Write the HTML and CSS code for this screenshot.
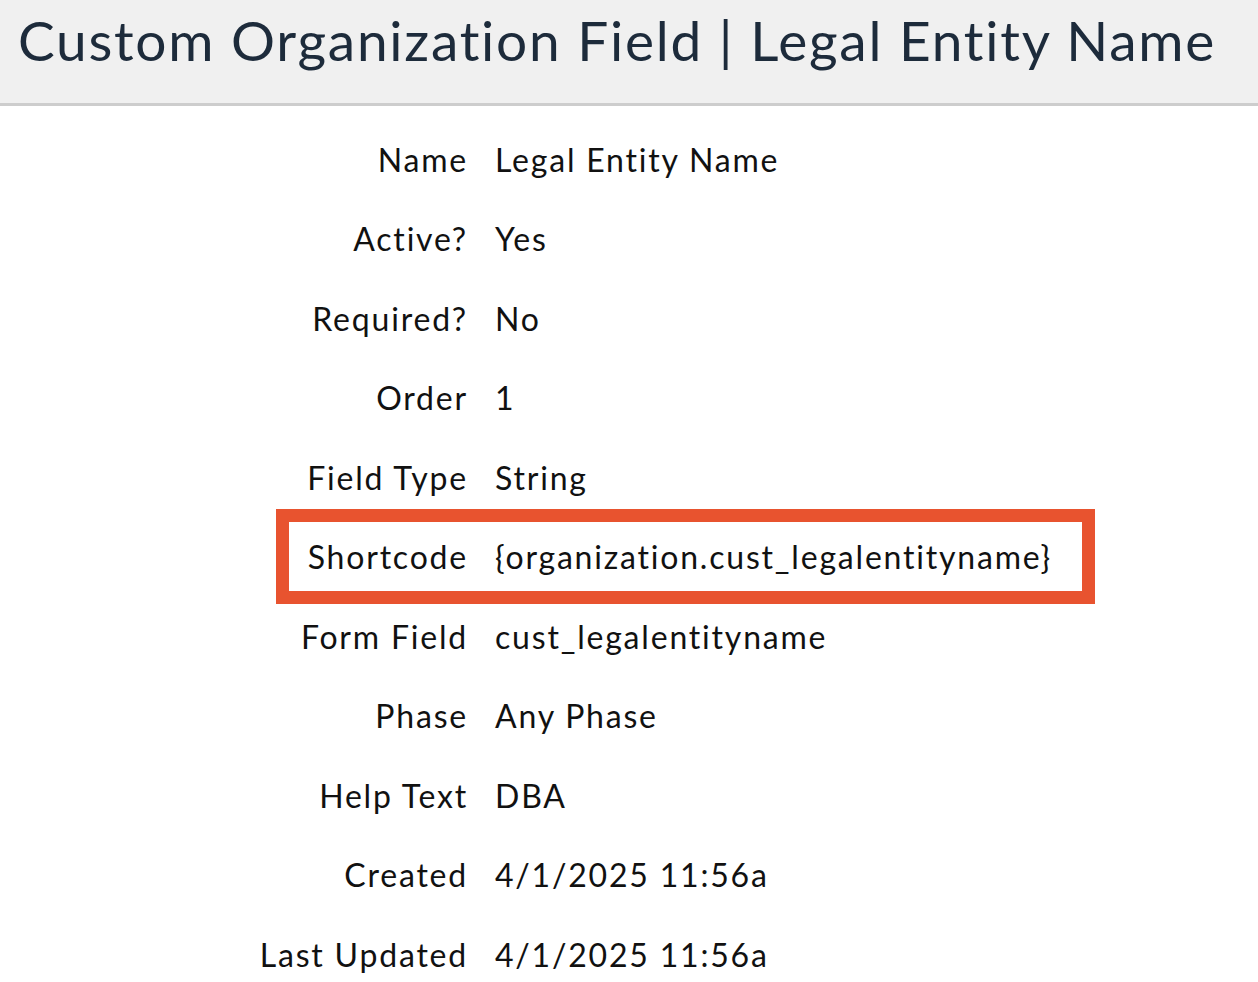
FILE: index.html
```html
<!DOCTYPE html>
<html lang="en">
<head>
  <meta charset="UTF-8">
  <meta name="viewport" content="width=device-width, initial-scale=1.0">
  <title>Custom Organization Field | Legal Entity Name</title>
  <link rel="stylesheet" href="styles.css">
</head>
<body>
  <header class="page-header">
    <h1>Custom Organization Field | Legal Entity Name</h1>
  </header>

  <dl class="field-details">
    <div class="row"><dt>Name</dt><dd>Legal Entity Name</dd></div>
    <div class="row"><dt>Active?</dt><dd>Yes</dd></div>
    <div class="row"><dt>Required?</dt><dd>No</dd></div>
    <div class="row"><dt>Order</dt><dd>1</dd></div>
    <div class="row"><dt>Field Type</dt><dd>String</dd></div>
    <div class="row highlighted"><dt>Shortcode</dt><dd>{organization.cust_legalentityname}</dd></div>
    <div class="row"><dt>Form Field</dt><dd>cust_legalentityname</dd></div>
    <div class="row"><dt>Phase</dt><dd>Any Phase</dd></div>
    <div class="row"><dt>Help Text</dt><dd>DBA</dd></div>
    <div class="row"><dt>Created</dt><dd>4/1/2025 11:56a</dd></div>
    <div class="row"><dt>Last Updated</dt><dd>4/1/2025 11:56a</dd></div>
  </dl>
</body>
</html>
```

FILE: styles.css
```css
body {
  margin: 0;
  background: #ffffff;
  color: #111111;
  font-family: Lato, "Noto Sans", sans-serif;
}

.page-header {
  height: 103px;
  background: #f0f0f0;
  border-bottom: 3px solid #cdcdcd;
  padding: 0 18px;
}

.page-header h1 {
  margin: 0;
  font-size: 55px;
  font-weight: 400;
  line-height: 80px;
  letter-spacing: 1.75px;
  color: #1d2b3b;
  white-space: nowrap;
}

.field-details {
  margin: 0;
  padding-top: 14px;
}

.row {
  position: relative;
  display: grid;
  grid-template-columns: 468px 1fr;
  column-gap: 27px;
  padding: 21.75px 0;
  font-size: 32px;
  line-height: 36px;
  letter-spacing: 1.8px;
}

.row dt {
  text-align: right;
}

.row dd {
  margin: 0;
}

.highlighted::after {
  content: "";
  position: absolute;
  left: 276px;
  top: -9px;
  width: 793px;
  height: 69px;
  border: 13px solid #e8532f;
}
```
